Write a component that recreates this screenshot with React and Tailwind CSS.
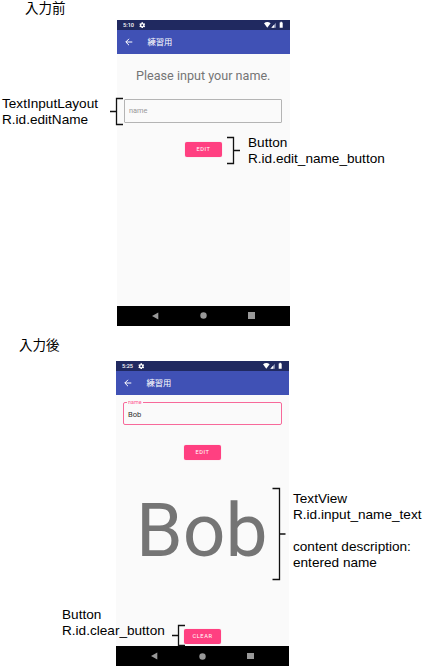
import React from "react";

const Gear = () => (
  <svg viewBox="0 0 24 24" className="ml-[4px] h-[6.5px] w-[6.5px]">
    <path
      fill="#fff"
      fillRule="evenodd"
      d="M9.500 1h5l.6 3.200 2 1.100 3.100-1.100 2.500 4.300-2.500 2.200v2.600l2.500 2.200-2.500 4.300-3.100-1.100-2 1.100-.6 3.200h-5l-.6-3.200-2-1.100-3.100 1.100-2.500-4.300 2.500-2.200v-2.600L1.300 8.500l2.500-4.300 3.100 1.100 2-1.100zM12 8.500a3.500 3.500 0 1 0 0 7 3.500 3.500 0 0 0 0-7z"
    />
  </svg>
);

const StatusIcons = () => (
  <svg width="21" height="8" viewBox="0 0 21 8" className="ml-auto mr-[5px]">
    <path d="M0 2.200Q3.300-.4 6.600 2.200L3.300 6.700z" fill="#fff" />
    <path d="M7.300 6.700H12V1.700z" fill="#8088ad" />
    <path d="M7.300 6.700H10.300V3.500z" fill="#fff" />
    <path d="M15.700 1.500h.8V.8h1.400v.7h.8v5.300h-3z" fill="#fff" />
  </svg>
);

const TopBars = ({ time }) => (
  <>
    <div className="flex h-[10px] items-center bg-[#202960] pl-[6px] text-white">
      <span className="w-[12px] whitespace-nowrap text-[5.600px] font-medium leading-[10px]">{time}</span>
      <Gear />
      <StatusIcons />
    </div>
    <div className="flex h-[23.500px] items-center bg-[#4051b5] pl-[8px] text-white">
      <svg width="8" height="8" viewBox="0 0 8 8" fill="none" stroke="#fff" strokeWidth="1">
        <path d="M7.300 4H.9M4 .8L.8 4 4 7.200" />
      </svg>
      <span className="mb-[2px] ml-[14.500px] font-['Noto_Sans_CJK_JP',sans-serif] text-[8.300px] font-normal leading-[12px]">
        練習用
      </span>
    </div>
  </>
);

const NavBar = () => (
  <div className="flex h-[20px] shrink-0 items-center justify-between bg-black pl-[35px] pr-[35px]">
    <svg width="7" height="8" viewBox="0 0 7 8"><path d="M0 4L6.300.5v7z" fill="#999" /></svg>
    <svg width="7" height="7" viewBox="0 0 7 7"><circle cx="3.500" cy="3.500" r="3.200" fill="#999" /></svg>
    <div className="h-[6.500px] w-[6.500px] bg-[#999]" />
  </div>
);

const PinkButton = ({ children }) => (
  <button className="block h-[15px] w-[37px] rounded-[2px] bg-[#ff4081] pl-[1px] text-center text-[5.700px] font-normal leading-[15px] tracking-[0.6px] text-white shadow-[0_0_1px_rgba(255,64,129,0.5)]">
    {children}
  </button>
);

const Note = ({ className, children }) => (
  <div
    className={
      "absolute whitespace-pre font-['Liberation_Sans',Arial,sans-serif] text-[13.600px] leading-[16px] text-black " +
      className
    }
  >
    {children}
  </div>
);

export default function App() {
  return (
    <div className="relative h-[667px] w-[442px] overflow-hidden bg-white font-[Roboto,sans-serif]">
      <div className="flex flex-col">
        <h2 className="ml-[25px] h-[20px] font-['Noto_Sans_CJK_JP',sans-serif] text-[13.500px] font-normal leading-[14px] text-black">
          入力前
        </h2>
        <section className="ml-[117px] flex h-[305.500px] w-[172.500px] flex-col bg-[#fafafa]">
          <TopBars time="5:10" />
          <p className="mt-[13px] text-center text-[12.600px] leading-[17px] text-[#757575]">Please input your name.</p>
          <div className="ml-[7px] mt-[15.500px] h-[23.500px] w-[158px] rounded-[1px] border border-[#b4b4b4] pl-[4px] text-[7.400px] leading-[22px] text-[#999]">
            name
          </div>
          <div className="ml-[67.500px] mt-[19.500px]"><PinkButton>EDIT</PinkButton></div>
          <div className="mt-auto"><NavBar /></div>
        </section>
        <h2 className="ml-[19px] mt-[8.500px] h-[27px] font-['Noto_Sans_CJK_JP',sans-serif] text-[13.500px] font-normal leading-[20px] text-black">
          入力後
        </h2>
        <section className="ml-[116px] flex h-[305px] w-[172.500px] flex-col bg-[#fafafa]">
          <TopBars time="5:25" />
          <div className="relative ml-[7px] mt-[7.500px] h-[23px] w-[159px] rounded-[2px] border border-[#f7699a] pl-[4px] text-[7.600px] leading-[23px] text-[#333]">
            <span className="absolute left-[3px] top-[-4px] bg-[#fafafa] px-[1px] text-[5.400px] leading-[6px] text-[#ff5b93]">
              name
            </span>
            Bob
          </div>
          <div className="ml-[67.500px] mt-[20px]"><PinkButton>EDIT</PinkButton></div>
          <p className="ml-[20px] mt-[26px] h-[88px] text-[75px] leading-[88px] text-[#757575]">Bob</p>
          <div className="mb-[2px] ml-[67.500px] mt-auto"><PinkButton>CLEAR</PinkButton></div>
          <NavBar />
        </section>
      </div>

      <Note className="left-[2px] top-[96px]">{"TextInputLayout\nR.id.editName"}</Note>
      <Note className="left-[248px] top-[135px]">{"Button\nR.id.edit_name_button"}</Note>
      <Note className="left-[293px] top-[491px]">{"TextView\nR.id.input_name_text\n\ncontent description:\nentered name"}</Note>
      <Note className="left-[62px] top-[607px]">{"Button\nR.id.clear_button"}</Note>

      <svg className="absolute left-0 top-0" width="442" height="667" fill="none" stroke="#111" strokeWidth="1.300">
        <path d="M123 98.500H116.500V124.500H123M116.500 111.500H110" />
        <path d="M227 137.500H233.500V163.500H227M233.500 150.500H240" />
        <path d="M272.500 488.500H279.500V579.500H272.500M279.500 534H285.500" />
        <path d="M185 625.500H178.500V645.500H185M178.500 635.500H172" />
      </svg>
    </div>
  );
}
